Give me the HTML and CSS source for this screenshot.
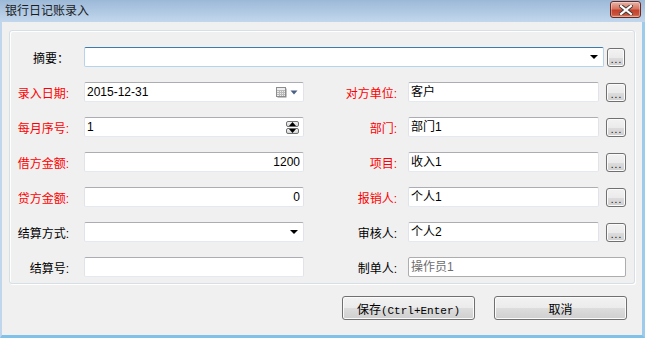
FILE: index.html
```html
<!DOCTYPE html>
<html>
<head>
  <meta charset="utf-8">
  <title>银行日记账录入</title>
  <link rel="stylesheet" href="styles.css">
</head>
<body>
  <div class="window">
    <div class="titlebar">
      <span class="title">银行日记账录入</span>
      <div class="close-btn">
        <svg width="14" height="10" viewBox="0 0 14 10">
          <path d="M2 1 L12 9 M12 1 L2 9" stroke="#3a3a3a" stroke-width="4" stroke-linecap="square"/>
          <path d="M2 1 L12 9 M12 1 L2 9" stroke="#ffffff" stroke-width="2.2" stroke-linecap="square"/>
        </svg>
      </div>
    </div>
    <div class="window-body">
      <div class="group">
        <div class="row">
          <label class="label">摘要：</label>
          <div class="field combo focused">
            <span></span>
            <span class="arrow"></span>
          </div>
          <div class="dots-btn first">...</div>
        </div>

        <div class="row">
          <label class="label red">录入日期:</label>
          <div class="field left-field">
            <span>2015-12-31</span>
            <span class="date-icons">
              <svg width="11" height="11" viewBox="0 0 11 11">
                <rect x="1.5" y="1.5" width="9" height="9" fill="#8a8a8a"/>
                <rect x="0.5" y="0.5" width="9" height="9" fill="#eeeeee" stroke="#8c8c8c"/>
                <path d="M1 3.5 H9 M1 5.5 H9 M1 7.5 H9 M3.5 3 V9 M5.5 3 V9 M7.5 3 V9" stroke="#b9b9b9"/>
              </svg>
              <svg width="8" height="5" viewBox="0 0 8 5"><path d="M0.5 0.5 H7.5 L4 4.5 Z" fill="#4b5f87"/></svg>
            </span>
          </div>
          <label class="rlabel red">对方单位:</label>
          <div class="field right-field">客户</div>
          <div class="dots-btn">...</div>
        </div>

        <div class="row">
          <label class="label red">每月序号:</label>
          <div class="field left-field">
            <span>1</span>
            <span class="spinner">
              <span class="spin-btn"><svg width="7" height="4" viewBox="0 0 7 4"><path d="M0 4 H7 L3.5 0 Z" fill="#000"/></svg></span>
              <span class="spin-btn"><svg width="7" height="4" viewBox="0 0 7 4"><path d="M0 0 H7 L3.5 4 Z" fill="#000"/></svg></span>
            </span>
          </div>
          <label class="rlabel red">部门:</label>
          <div class="field right-field">部门1</div>
          <div class="dots-btn">...</div>
        </div>

        <div class="row">
          <label class="label red">借方金额:</label>
          <div class="field left-field num">1200</div>
          <label class="rlabel red">项目:</label>
          <div class="field right-field">收入1</div>
          <div class="dots-btn">...</div>
        </div>

        <div class="row">
          <label class="label red">贷方金额:</label>
          <div class="field left-field num">0</div>
          <label class="rlabel red">报销人:</label>
          <div class="field right-field">个人1</div>
          <div class="dots-btn">...</div>
        </div>

        <div class="row">
          <label class="label">结算方式:</label>
          <div class="field left-field combo">
            <span></span>
            <span class="arrow"></span>
          </div>
          <label class="rlabel">审核人:</label>
          <div class="field right-field">个人2</div>
          <div class="dots-btn">...</div>
        </div>

        <div class="row">
          <label class="label">结算号:</label>
          <div class="field left-field"></div>
          <label class="rlabel">制单人:</label>
          <div class="field readonly">操作员1</div>
        </div>
      </div>

      <div class="actions">
        <button class="btn">保存<span class="mono">(Ctrl+Enter)</span></button>
        <button class="btn">取消</button>
      </div>
    </div>
  </div>
</body>
</html>
```

FILE: styles.css
```css
body {
  margin: 0;
  font-family: "Liberation Sans", "Noto Sans CJK SC", sans-serif;
  font-size: 12px;
  color: #000;
  background-color: #f0f0f0;
}

.window {
  width: 645px;
  height: 338px;
  display: flex;
  flex-direction: column;
  overflow: hidden;
}

.titlebar {
  height: 22px;
  display: flex;
  align-items: center;
  justify-content: space-between;
  padding: 0 4px 0 5px;
  background: linear-gradient(#9cb9d8, #c2d7ed);
  box-sizing: border-box;
}

.title {
  font-size: 12px;
  color: #1c1c1c;
  line-height: 16px;
}

.close-btn {
  width: 31px;
  height: 17px;
  margin-top: -3px;
  box-sizing: border-box;
  border: 1px solid #6b2a21;
  border-radius: 3px;
  background: linear-gradient(#eab2a4 0%, #d87561 45%, #c5402a 55%, #c8553d 85%, #dd8c6c 100%);
  box-shadow: inset 0 0 0 1px rgba(255, 255, 255, 0.35);
  display: flex;
  align-items: center;
  justify-content: center;
}

.window-body {
  flex: 1;
  background-color: #f0f0f0;
  border-left: 2px solid #c0d6ec;
  border-right: 3px solid #9ccbec;
  border-bottom: 3px solid #7fc1e9;
}

.group {
  margin: 8px 7px 0 7px;
  padding: 16px 0 6px 0;
  border: 1px solid #d5dfe5;
  border-radius: 3px;
  box-shadow: inset 1px 1px 0 #fff, 1px 1px 0 #fff;
  display: flex;
  flex-direction: column;
  gap: 15px;
}

.row {
  display: flex;
  align-items: center;
  height: 20px;
}

.label {
  width: 74px;
  padding-right: 15px;
  box-sizing: border-box;
  text-align: right;
  white-space: nowrap;
}

.rlabel {
  width: 104px;
  padding-right: 11px;
  box-sizing: border-box;
  text-align: right;
  white-space: nowrap;
}

.red {
  color: #ff0000;
}

.field {
  height: 20px;
  box-sizing: border-box;
  border: 1px solid #e2e3ea;
  border-top-color: #abadb3;
  border-bottom-color: #e3e9ef;
  border-radius: 2px;
  background-color: #fff;
  padding: 0 3px 0 2px;
  line-height: 18px;
  display: flex;
  align-items: center;
  justify-content: space-between;
  white-space: nowrap;
}

.left-field {
  width: 220px;
}

.right-field {
  width: 191px;
}

.num {
  justify-content: flex-end;
}

.combo {
  width: 520px;
}

.combo.left-field {
  width: 220px;
  padding-right: 5px;
}

.focused {
  border-color: #b4d3ec;
  border-top-color: #3d7bad;
  padding-right: 5px;
}

.arrow {
  width: 0;
  height: 0;
  border-left: 4px solid transparent;
  border-right: 4px solid transparent;
  border-top: 4px solid #000;
}

.readonly {
  width: 218px;
  border-color: #adadad;
  color: #6d6d6d;
}

.date-icons {
  display: flex;
  align-items: center;
  gap: 3px;
  margin-right: 2px;
}

.spinner {
  display: flex;
  flex-direction: column;
  gap: 1px;
  margin-right: 1px;
}

.spin-btn {
  width: 13px;
  height: 6px;
  box-sizing: border-box;
  border: 1px solid #707070;
  border-radius: 2px;
  background: linear-gradient(#f4f4f4, #d6d6d6);
  display: flex;
  align-items: center;
  justify-content: center;
}

.dots-btn {
  width: 20px;
  height: 19px;
  margin-left: 7px;
  box-sizing: border-box;
  border: 1px solid #707070;
  border-radius: 3px;
  background: linear-gradient(#f2f2f2 0%, #ebebeb 50%, #dddddd 51%, #cfcfcf 100%);
  box-shadow: inset 0 0 0 1px #fbfbfb;
  font-size: 10px;
  line-height: 10px;
  letter-spacing: 1px;
  text-align: center;
  padding-top: 6px;
  padding-left: 1px;
}

.dots-btn.first {
  width: 18px;
  margin-left: 3px;
}

.actions {
  display: flex;
  justify-content: flex-end;
  gap: 19px;
  padding: 12px 15px 0 0;
}

.btn {
  width: 133px;
  height: 24px;
  border: 1px solid #707070;
  border-radius: 3px;
  background: linear-gradient(#f2f2f2 0%, #ebebeb 50%, #dddddd 51%, #cfcfcf 100%);
  box-shadow: inset 0 0 0 1px #fbfbfb;
  font-family: "Liberation Sans", "Noto Sans CJK SC", sans-serif;
  font-size: 12px;
  color: #000;
  padding: 0;
}

.mono {
  font-family: "Liberation Mono", monospace;
  font-size: 11px;
}
```
